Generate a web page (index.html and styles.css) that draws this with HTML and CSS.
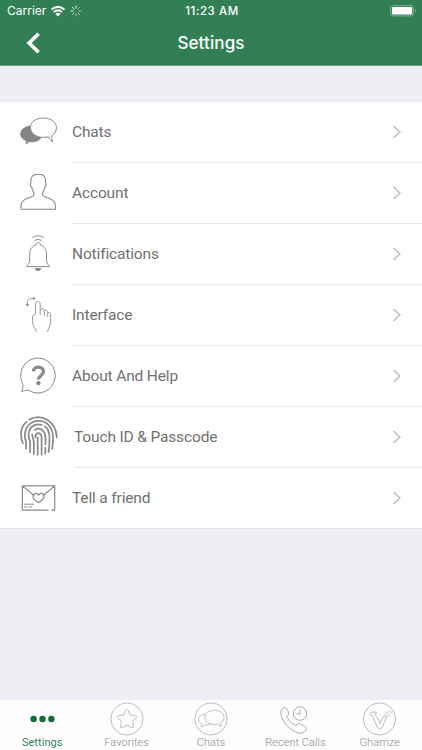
FILE: index.html
```html
<!DOCTYPE html>
<html lang="en">
<head>
<meta charset="utf-8">
<title>Settings</title>
<link rel="stylesheet" href="styles.css">
</head>
<body>
<div class="screen">
  <header class="header">
    <div class="status">
      <div class="carrier">
        <span>Carrier</span>
        <svg class="wifi" width="14" height="11" viewBox="0 0 14 11"><path d="M.6 3.6Q7-2 13.400 3.600M2.800 6.100Q7 2.400 11.200 6.100" fill="none" stroke="#fff" stroke-width="1.900"/><path d="M4.500 7.900Q7 5.800 9.500 7.900L7 10.600Z" fill="#fff"/></svg>
        <svg width="12" height="12" viewBox="0 0 12 12" fill="none" stroke="#fff" stroke-width="1" stroke-linecap="round"><path d="M6 1v2.200M2.400 2.400L4 4M1 6h2.200" opacity=".9"/><path d="M2.400 9.600L4 8M6 11V8.800M9.600 9.600L8 8" opacity=".65"/><path d="M11 6H8.800M9.600 2.400L8 4" opacity=".45"/></svg>
      </div>
      <span class="time">11:23 AM</span>
      <svg class="battery" width="27" height="12" viewBox="0 0 27 12"><rect x=".6" y=".6" width="23" height="10.300" rx="2.600" fill="none" stroke="#7fb094"/><rect x="2" y="2" width="20.200" height="7.500" rx="1.300" fill="#fff"/><path d="M25 4q2 1.800 0 3.600z" fill="#7fb094"/></svg>
    </div>
    <div class="navbar">
      <svg class="back" width="16" height="22" viewBox="0 0 16 22"><path d="M13.600 1.700L4.100 11l9.500 9.300" fill="none" stroke="#fff" stroke-width="3.700"/></svg>
      <h1>Settings</h1>
    </div>
  </header>

  <main class="list">
    <a class="row">
      <svg class="icon" viewBox="0 0 44 60"><path d="M14 25C8 26 4.700 29 4.700 33c0 3 2 5 5.300 6.500.6 1.100.4 2.400 0 3.600 1.400-.6 2.100-1.600 2.600-2.600 5.400 1 10.400-.3 12.400-4-6.200-1-10.700-5.500-11-11.500z" fill="#858585"/><path d="M27.400 17c-7.500 0-13 4.100-13 9.500s5.500 9.900 13 9.900c1.800 0 3.500-.2 5.100-.7.500 2 1.800 3.700 4.200 5-.9-2-1.200-4-.8-6 3-1.700 4.500-4.800 4.500-8.200 0-5.400-5.500-9.500-13-9.500z" fill="#fff"/></svg>
      <span class="label">Chats</span><svg class="chev" viewBox="0 0 10 16"><path d="M1.500 2l6.300 6-6.300 6"/></svg>
    </a>
    <a class="row">
      <svg class="icon" viewBox="0 0 44 60"><path d="M5 47.300V44c0-4 2.300-6 6-7.400 3.300-1.200 6.400-1.800 7-4.300.2-1.200-.5-2.200-1.200-3.600-.6-1.200-.9-2.400-1-3.600-1.800-.4-1.700-2.800-.9-4.100-.8-5.700 1.600-8.700 7.400-8.700s8.100 3 7.300 8.700c.9 1.300 1 3.700-.9 4.100-.1 1.200-.4 2.400-1 3.600-.7 1.400-1.400 2.400-1.200 3.600.6 2.500 3.700 3.100 7 4.300 3.700 1.400 6 3.400 6 7.400v3.300z" stroke-width="1.100"/></svg>
      <span class="label">Account</span><svg class="chev" viewBox="0 0 10 16"><path d="M1.500 2l6.300 6-6.300 6"/></svg>
    </a>
    <a class="row">
      <svg class="icon" viewBox="0 0 44 60"><path d="M16.300 14.800q5.800-4.200 11.600 0M18.400 17.500q3.700-2.500 7.400 0M19.900 22c0-3.400 4.400-3.400 4.400 0 4.300 1.500 6.200 4.500 6.200 9.500v4.600c0 3.600.9 4.900 3 6.800v.7H10.700v-.7c2.100-1.900 3-3.200 3-6.800v-4.600c0-5 1.900-8 6.200-9.500z"/><path d="M18.900 45h6.400c-.5 4-5.900 4-6.400 0z" class="solid"/></svg>
      <span class="label">Notifications</span><svg class="chev" viewBox="0 0 10 16"><path d="M1.500 2l6.300 6-6.300 6"/></svg>
    </a>
    <a class="row">
      <svg class="icon thin" viewBox="0 0 44 60"><path d="M20.500 48c-.6-3.300-4-6-4-10.300V33c0-1.700 1.400-2.400 2.900-2.700V20c0-3.100 4.800-3.100 4.800 0v11M24.200 26c.7-2 4.200-1.600 4.200.8V32M28.400 26.500c1.500-1 3.300 0 3.300 2V33M31.700 28.300c1.700-.5 2.900.7 2.900 2.400v6.800c0 4.300-2.500 6.500-3.100 10.500M11.300 21v-2c0-2.500 1.500-4.500 4.500-4.500h2"/><path d="M9.700 20l1.600 2.800L13 20zM17 12.800l2.600 1.600L17 16z" class="solid"/></svg>
      <span class="label">Interface</span><svg class="chev" viewBox="0 0 10 16"><path d="M1.500 2l6.300 6-6.300 6"/></svg>
    </a>
    <a class="row">
      <svg class="icon" viewBox="0 0 44 60"><path d="M7.100 39.500A17.300 17.500 0 1 1 13 45.500c-2-.6-4.600.1-7.300 1.200.9-2.700 1.300-5 1.400-7.200z"/><path d="M17.300 26.300c.4-5.800 10.200-5.300 10.200.2 0 4.100-5 4-5 8" stroke-width="3.300"/><circle cx="22.400" cy="38.200" r="2.100" class="solid"/></svg>
      <span class="label">About And Help</span><svg class="chev" viewBox="0 0 10 16"><path d="M1.500 2l6.300 6-6.300 6"/></svg>
    </a>
    <a class="row touch">
      <svg class="icon" viewBox="0 0 44 60"><g stroke-width="1.750" stroke-linecap="round"><path d="M13.300 13.600C19 10.400 26 10.500 31.500 14c6.200 4 9 10.500 9.300 17.500M10.600 15.600C6.600 19 4.700 24 5.100 29.500q.2 4.500 1.800 8"/><path d="M8.800 30c0-8.500 5.500-15.200 13.900-15.200 8.800 0 14 7.200 14.300 16 .1 4.500-.2 9-.8 12.200M8.800 30q.1 3 1.300 5.500v7.200"/><path d="M29 20.500c3 2.400 4.500 6.500 4.500 10.500q.1 9-.9 15M25.800 19c-7.300-2.400-13.200 2.500-13.200 10 0 3 1.500 4.500 1.500 8v9.300"/><path d="M19 24c4.500-3.500 10 .5 10.500 7v7M29.300 41.800v5.800M16.200 28.500c.4 3.500 1.700 5.500 1.700 9V48"/><path d="M19.400 31.500c-.4-6 6-6 6.200 0v17M21.700 31.500v17.300"/></g></svg>
      <span class="label">Touch ID &amp; Passcode</span><svg class="chev" viewBox="0 0 10 16"><path d="M1.500 2l6.300 6-6.300 6"/></svg>
    </a>
    <a class="row">
      <svg class="icon" viewBox="0 0 44 60"><path d="M32.500 43.100H6.400V18.900h32.300v24.200h-3.500M6.400 18.900l12 9.800M38.700 18.900l-11.700 9.800M22.500 35.600c-8.500-5-5.200-9.400-2.400-9.200 1.300.1 2.100.9 2.400 1.800.4-.9 1.100-1.700 2.400-1.800 2.800-.2 6.100 4.200-2.400 9.200z" stroke-width="1.200"/><path d="M8 37.200h10M8 39.900h3M12.500 39.900h3.800"/></svg>
      <span class="label">Tell a friend</span><svg class="chev" viewBox="0 0 10 16"><path d="M1.500 2l6.300 6-6.300 6"/></svg>
    </a>
  </main>

  <nav class="tabs">
    <a class="tab active">
      <svg viewBox="0 0 36 36"><g fill="#126b3b"><circle cx="9.600" cy="18" r="3.200"/><circle cx="18.500" cy="18" r="3.200"/><circle cx="27.400" cy="18" r="3.200"/></g></svg>
      <span>Settings</span>
    </a>
    <a class="tab">
      <svg viewBox="0 0 36 36"><circle cx="18" cy="18" r="16.100"/><path d="M18 8.500q.8 0 1.200.9l2.200 4.600 5.300.7q1.800.5.700 1.800l-3.800 3.700.9 5.600q0 1.600-1.600 1L18 24.100l-4.900 2.700q-1.600.6-1.600-1l.9-5.600-3.800-3.700q-1.100-1.300.7-1.800l5.300-.7 2.200-4.600q.4-.9 1.200-.9z"/></svg>
      <span>Favorites</span>
    </a>
    <a class="tab">
      <svg viewBox="0 0 36 36"><circle cx="18" cy="18" r="16.100"/><path d="M21.500 9.200c5.400 0 9.600 3.200 9.600 7.100 0 2.600-1.500 4.700-3.500 5.900-.1 1.300.1 2.500.8 3.500-1.600-.6-2.700-1.500-3.100-2.700-1.200.3-2.500.5-3.800.5-5.400 0-9.600-3.200-9.600-7.200s4.200-7.100 9.600-7.100zM12.100 13.200C8.300 13.500 5.600 15.800 5.600 18.800c0 2 1.200 3.600 3.100 4.600.1 1 0 1.900-.6 2.700 1.600-.4 2.400-1.100 3-2.100 2.800.5 5.600-.2 7.100-1.600"/></svg>
      <span>Chats</span>
    </a>
    <a class="tab">
      <svg viewBox="0 0 36 36"><path d="M5.500 7.500c1.400-1.500 3-1.300 4 .2l2 3.200c.8 1.700.2 2.600-1 3.600-.8.700-.8 1.200-.3 2 2 3.300 4.600 5.800 7.800 7.700.8.500 1.300.4 1.900-.4 1.100-1.300 2-1.700 3.600-.8l5 3c1.200.8 1.400 1.700.4 2.900-2.200 3-4.600 3.900-8.200 2.800C12 28.500 6 21.500 4.200 14.500c-.6-2.600-.3-5 1.300-7z" stroke="#aaa"/><circle cx="23" cy="12.600" r="6.700" stroke="#aaa"/><path d="M23 8.500V13h-3.500" stroke="#aaa"/></svg>
      <span>Recent Calls</span>
    </a>
    <a class="tab">
      <svg viewBox="0 0 36 36"><circle cx="17.500" cy="18" r="16.100"/><path d="M7.500 13.200c1-1.600 2.900-2.300 5.200-2.200l1.900.2-1.500 2.500c2.100 2.200 3.500 5.200 4.900 8.900 1.200-2.800 2-5 3-6.700h3.600c-1.600 3.900-3.300 8.400-5.400 11.500-1 1-2.400 1-3.500-.2-2.200-3.800-3.200-8.500-5.400-12.100z"/><path d="M23 11q4.800.1 4.800 4.500M22 13q3.700 0 3.900 3.200M26.500 9.600q3.500.7 4 3.500M22.800 14.800l1.700 1.300" stroke-width=".8"/></svg>
      <span>Ghamze</span>
    </a>
  </nav>
</div>
</body>
</html>
```
FILE: styles.css
```css
* { box-sizing: border-box; }
body { margin: 0; font-family: Roboto, sans-serif; }
.screen {
  width: 422px;
  height: 750px;
  display: flex;
  flex-direction: column;
  background: #efeef4;
  overflow: hidden;
}
.header {
  height: 66px;
  flex: none;
  background: #327f55;
  border-bottom: 1px solid #649e7d;
  color: #fff;
}
.status {
  height: 22px;
  display: grid;
  grid-template-columns: 1fr auto 1fr;
  align-items: center;
  padding: 0 5px 0 7px;
  font: 12px/22px Inter, sans-serif;
}
.carrier { display: flex; align-items: center; }
.wifi { margin: 0 5px 0 5px; }
.time { font-weight: 500; font-size: 11.5px; letter-spacing: .55px; }
.battery { justify-self: end; }
.navbar {
  height: 42px;
  display: grid;
  grid-template-columns: 1fr auto 1fr;
  align-items: center;
}
.back { margin-left: 25px; }
.navbar h1 { margin: 0; font: 500 17px/22px Inter, sans-serif; letter-spacing: .1px; }
.list {
  margin-top: 35px;
  flex: none;
  background: #fff;
  border-top: 1px solid #e9e9ed;
  border-bottom: 1px solid #e3e3e7;
}
.row {
  height: 61px;
  display: flex;
  padding-left: 16px;
  line-height: 60px;
}
.row:last-child { height: 60px; }
.icon {
  width: 44px;
  height: 60px;
  flex: none;
  margin: -1px 12px 0 0;
  fill: none;
  stroke: #8b8b8b;
  stroke-width: 1;
  stroke-linejoin: round;
}
.icon .solid { fill: #858585; stroke: none; }
.thin { stroke: #9a9a9a; }
.label {
  flex: 1;
  color: #717171;
  font-size: 15.5px;
  letter-spacing: -.15px;
  border-bottom: 1px solid #e8e8e8;
}
.chev {
  width: 30px;
  height: 100%;
  padding-right: 20px;
  fill: none;
  stroke: #c3c3c7;
  stroke-width: 1.700;
  border-bottom: 1px solid #e8e8e8;
}
.row:last-child .label, .row:last-child .chev { border-bottom: 0; }
.touch .icon { margin-right: 14px; }
.tabs {
  height: 50px;
  margin-top: auto;
  flex: none;
  display: grid;
  grid-template-columns: repeat(5, 1fr);
  background: #fdfdfd;
}
.tab {
  display: flex;
  flex-direction: column;
  align-items: center;
  color: #8c8c8c;
  font-size: 11px;
  font-weight: 300;
  line-height: 13px;
  letter-spacing: .05px;
  padding-top: 1px;
}
.tab svg {
  width: 36px;
  height: 36px;
  flex: none;
  margin-bottom: -1px;
  fill: none;
  stroke: #bdbdbd;
  stroke-width: 1;
}
.active { color: #33855a; font-weight: 400; }
.active svg { stroke: none; }
```
